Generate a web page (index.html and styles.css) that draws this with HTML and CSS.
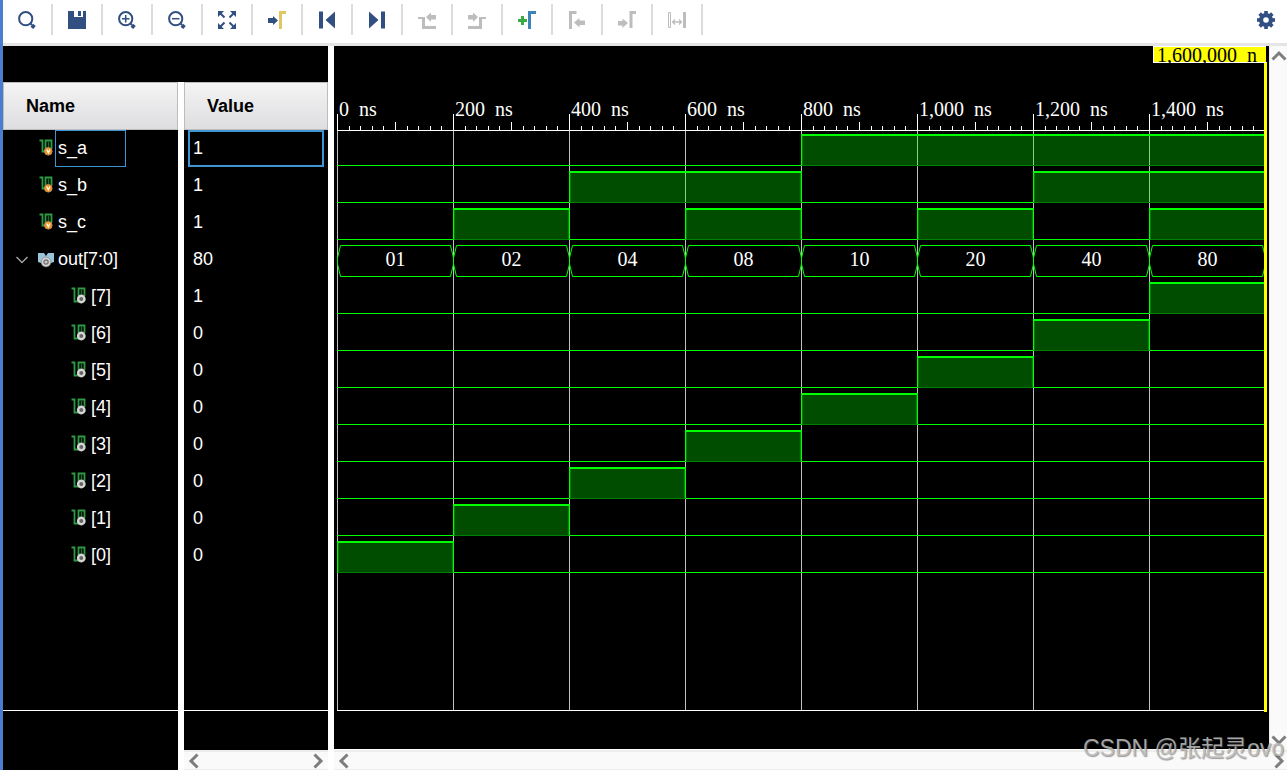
FILE: index.html
```
<!DOCTYPE html>
<html lang="en">
<head>
<meta charset="utf-8">
<title>Waveform viewer</title>
<link rel="stylesheet" href="styles.css">
</head>
<body>
<svg class="defs" aria-hidden="true">
  <defs>
    <symbol id="sig-in" viewBox="0 0 16 17">
      <path d="M.5 1.500H3.500V12.500H6.500V1.500H12.500V10" fill="none" stroke="#2f9a44" stroke-width="1.800"/>
      <path d="M9.500 2.500v6" stroke="#1d6b2c" stroke-width="1.500"/>
      <circle cx="9.300" cy="12.300" r="3.800" fill="#f7941e" stroke="#c08a55"/>
      <path d="M7.700 10.500l1.600 3.300 1.600-3.300" fill="none" stroke="#fff" stroke-width="1.200"/>
    </symbol>
    <symbol id="sig-bit" viewBox="0 0 16 17">
      <path d="M.5 1.500H3.500V14.500H7.500V1.500H13.500V9" fill="none" stroke="#2f9a44" stroke-width="1.800"/>
      <path d="M10.500 2.500v5" stroke="#1d6b2c" stroke-width="1.500"/>
      <circle cx="10.300" cy="12" r="3.200" fill="#666" stroke="#d6d6d6" stroke-width="2.400"/>
    </symbol>
    <symbol id="bus" viewBox="0 0 16 16">
      <path d="M0 1h6l2 3 2-3h6v9l-3 1H3l-3-1z" fill="#9cc4d8"/>
      <circle cx="8" cy="10" r="4.900" fill="#d4d4d4" stroke="#777" stroke-width=".6"/>
      <circle cx="8" cy="10" r="2.200" fill="#c4c4c4" stroke="#6f6f6f" stroke-width="1.200"/>
    </symbol>
    <symbol id="chev-l" viewBox="0 0 16 16"><path d="M11.500 1.500L5 8l6.500 6.500" fill="none" stroke="#7d7d7d" stroke-width="3"/></symbol>
    <symbol id="chev-r" viewBox="0 0 16 16"><path d="M4.500 1.500L11 8l-6.500 6.500" fill="none" stroke="#7d7d7d" stroke-width="3"/></symbol>
    <symbol id="chev-u" viewBox="0 0 16 16"><path d="M1.500 11.500L8 5l6.500 6.500" fill="none" stroke="#7d7d7d" stroke-width="3"/></symbol>
    <symbol id="chev-d" viewBox="0 0 16 16"><path d="M1.500 4.500L8 11l6.500-6.500" fill="none" stroke="#7d7d7d" stroke-width="3"/></symbol>
    <g id="ticks" fill="#fff" shape-rendering="crispEdges">
      <rect x="0" y="0" width="1" height="16"/>
      <rect x="10%" y="12" width="1" height="4"/><rect x="20%" y="12" width="1" height="4"/>
      <rect x="30%" y="12" width="1" height="4"/><rect x="40%" y="12" width="1" height="4"/>
      <rect x="50%" y="8" width="1" height="8"/>
      <rect x="60%" y="12" width="1" height="4"/><rect x="70%" y="12" width="1" height="4"/>
      <rect x="80%" y="12" width="1" height="4"/><rect x="90%" y="12" width="1" height="4"/>
    </g>
    <symbol id="cap-l" viewBox="0 0 5 32"><path d="M5 .5H3.500L.5 13v6L3.500 31.500H5" fill="none" stroke="#0f0"/></symbol>
    <symbol id="cap-r" viewBox="0 0 5 32"><path d="M0 .5h1.500L4.500 13v6L1.500 31.500H0" fill="none" stroke="#0f0"/></symbol>
  </defs>
</svg>

<div class="app">
  <header class="toolbar">
    <button class="tool" aria-label="Search"><svg viewBox="0 0 18 18"><circle cx="7.700" cy="7.700" r="6.600" fill="none" stroke="#324f82" stroke-width="2"/><path d="M12.500 12.500l1.500 1.500" stroke="#324f82" stroke-width="2"/><path d="M13.800 14.300l2.700 2.200" stroke="#324f82" stroke-width="4"/></svg></button>
    <button class="tool" aria-label="Save"><svg viewBox="0 0 18 18"><path d="M0 0h6v6h9V0h3v18H0z" fill="#324f82"/><path d="M10 0h3v5h-3z" fill="#324f82"/></svg></button>
    <button class="tool" aria-label="Zoom in"><svg viewBox="0 0 18 18"><circle cx="7.700" cy="7.700" r="6.600" fill="none" stroke="#324f82" stroke-width="2"/><path d="M4 7.700h7.500M7.700 4v7.500" stroke="#324f82" stroke-width="1.500"/><path d="M12.500 12.500l1.500 1.500" stroke="#324f82" stroke-width="2"/><path d="M13.800 14.300l2.700 2.200" stroke="#324f82" stroke-width="4"/></svg></button>
    <button class="tool" aria-label="Zoom out"><svg viewBox="0 0 18 18"><circle cx="7.700" cy="7.700" r="6.600" fill="none" stroke="#324f82" stroke-width="2"/><path d="M4 7.700h7.500" stroke="#324f82" stroke-width="1.500"/><path d="M12.500 12.500l1.500 1.500" stroke="#324f82" stroke-width="2"/><path d="M13.800 14.300l2.700 2.200" stroke="#324f82" stroke-width="4"/></svg></button>
    <button class="tool" aria-label="Zoom fit"><svg viewBox="0 0 18 18"><path d="M0 0h6L0 6zM18 0h-6l6 6zM0 18h6l-6-6zM18 18h-6l6-6z" fill="#324f82"/><path d="M2 2l4.500 4.500M16 2l-4.500 4.500M2 16l4.500-4.500M16 16l-4.500-4.500" stroke="#324f82" stroke-width="2"/></svg></button>
    <button class="tool" aria-label="Go to cursor"><svg viewBox="0 0 18 18"><path d="M0 7h5V5l5 4.500L5 14v-2H0z" fill="#324f82"/><path d="M12.500 18V1.500H18" fill="none" stroke="#e0c764" stroke-width="3"/></svg></button>
    <button class="tool" aria-label="Go to start"><svg viewBox="0 0 18 18"><path d="M1 .5h4v17H1zM17 .5v17L7.500 9z" fill="#324f82"/></svg></button>
    <button class="tool" aria-label="Go to end"><svg viewBox="0 0 18 18"><path d="M1 .5v17L10.500 9zM13 .5h4v17h-4z" fill="#324f82"/></svg></button>
    <button class="tool" aria-label="Previous transition"><svg viewBox="0 0 18 18"><path d="M8 6l5-4.500V4h5v4.500h-5V11zM0 6h7v9h11v3H4V8H0z" fill="#bdbdbd"/></svg></button>
    <button class="tool" aria-label="Next transition"><svg viewBox="0 0 18 18"><path d="M10 6L5 1.500V4H0v4.500h5V11zM18 6h-7v9H0v3h14V8h4z" fill="#bdbdbd"/></svg></button>
    <button class="tool" aria-label="Add marker"><svg viewBox="0 0 18 18"><path d="M0 9.500h9M4.500 5v9" stroke="#39ad43" stroke-width="3"/><path d="M11.500 18V1.500H18" fill="none" stroke="#3b84b8" stroke-width="3"/></svg></button>
    <button class="tool" aria-label="Previous marker"><svg viewBox="0 0 18 18"><path d="M2.500 18V1.500h6" fill="none" stroke="#bdbdbd" stroke-width="3"/><path d="M6 11.500L11.500 7v2.500H17v4.500h-5.500v2.500z" fill="#bdbdbd"/></svg></button>
    <button class="tool" aria-label="Next marker"><svg viewBox="0 0 18 18"><path d="M13 17V1.500h5" fill="none" stroke="#bdbdbd" stroke-width="3"/><path d="M10 12L4.500 7.500V10H0v4.500h4.500V17z" fill="#bdbdbd"/></svg></button>
    <button class="tool" aria-label="Swap cursors"><svg viewBox="0 0 18 18"><path d="M.5 1.500h2v15h-2z" fill="none" stroke="#bdbdbd"/><path d="M15 1h3v16h-3z" fill="#bdbdbd"/><path d="M4.500 11h9M7 8.500L4.500 11 7 13.500M11 8.500l2.500 2.500-2.500 2.500" fill="none" stroke="#bdbdbd" stroke-width="1.300"/></svg></button>
    <button class="tool settings" aria-label="Settings"><svg viewBox="-9 -9 18 18"><g fill="#324f82"><path d="M-1.800-9h3.600v18h-3.600z"/><path d="M-1.800-9h3.600v18h-3.600z" transform="rotate(45)"/><path d="M-1.800-9h3.600v18h-3.600z" transform="rotate(90)"/><path d="M-1.800-9h3.600v18h-3.600z" transform="rotate(135)"/><circle r="7"/></g><circle r="2.800" fill="#fff"/></svg></button>
  </header>

  <main class="workspace">
    <section class="signals">
      <div class="pane names">
        <h2>Name</h2>
        <ul>
          <li class="top"><svg class="ico"><use href="#sig-in"/></svg><span class="label selected">s_a</span></li>
          <li class="top"><svg class="ico"><use href="#sig-in"/></svg><span class="label">s_b</span></li>
          <li class="top"><svg class="ico"><use href="#sig-in"/></svg><span class="label">s_c</span></li>
          <li class="group"><button class="expand" aria-label="Collapse out[7:0]"><svg viewBox="0 0 12 8"><path d="M.5 1L6 6.500 11.500 1" fill="none" stroke="#a0a0a0" stroke-width="1.500"/></svg></button><svg class="bus-ico"><use href="#bus"/></svg><span class="label">out[7:0]</span></li>
          <li class="bit"><svg class="ico"><use href="#sig-bit"/></svg><span class="label">[7]</span></li>
          <li class="bit"><svg class="ico"><use href="#sig-bit"/></svg><span class="label">[6]</span></li>
          <li class="bit"><svg class="ico"><use href="#sig-bit"/></svg><span class="label">[5]</span></li>
          <li class="bit"><svg class="ico"><use href="#sig-bit"/></svg><span class="label">[4]</span></li>
          <li class="bit"><svg class="ico"><use href="#sig-bit"/></svg><span class="label">[3]</span></li>
          <li class="bit"><svg class="ico"><use href="#sig-bit"/></svg><span class="label">[2]</span></li>
          <li class="bit"><svg class="ico"><use href="#sig-bit"/></svg><span class="label">[1]</span></li>
          <li class="bit"><svg class="ico"><use href="#sig-bit"/></svg><span class="label">[0]</span></li>
        </ul>
        <div class="foot"></div>
      </div>
      <div class="pane values">
        <h2>Value</h2>
        <ul>
          <li class="selected">1</li><li>1</li><li>1</li><li>80</li>
          <li>1</li><li>0</li><li>0</li><li>0</li><li>0</li><li>0</li><li>0</li><li>0</li>
        </ul>
        <div class="foot"></div>
        <div class="hscroll">
          <button aria-label="Scroll values left"><svg><use href="#chev-l"/></svg></button>
          <button aria-label="Scroll values right"><svg><use href="#chev-r"/></svg></button>
        </div>
      </div>
    </section>

    <section class="wave">
      <div class="view">
        <div class="canvas">
          <div class="plot">
            <div class="ruler">
              <div><span>0 <b>ns</b></span><svg><use href="#ticks"/></svg></div>
              <div><span>200 <b>ns</b></span><svg><use href="#ticks"/></svg></div>
              <div><span>400 <b>ns</b></span><svg><use href="#ticks"/></svg></div>
              <div><span>600 <b>ns</b></span><svg><use href="#ticks"/></svg></div>
              <div><span>800 <b>ns</b></span><svg><use href="#ticks"/></svg></div>
              <div><span>1,000 <b>ns</b></span><svg><use href="#ticks"/></svg></div>
              <div><span>1,200 <b>ns</b></span><svg><use href="#ticks"/></svg></div>
              <div><span>1,400 <b>ns</b></span><svg><use href="#ticks"/></svg></div>
            </div>
            <div class="tracks">
              <div class="grid"><i></i><i></i><i></i><i></i><i></i><i></i><i></i><i></i></div>
              <div class="track"><i class="lo w4"></i><i class="hi w4"></i></div>
              <div class="track"><i class="lo w2"></i><i class="hi w2"></i><i class="lo w2"></i><i class="hi w2"></i></div>
              <div class="track"><i class="lo"></i><i class="hi"></i><i class="lo"></i><i class="hi"></i><i class="lo"></i><i class="hi"></i><i class="lo"></i><i class="hi"></i></div>
              <div class="track">
                <div class="word"><svg><use href="#cap-l"/></svg><span>01</span><svg><use href="#cap-r"/></svg></div>
                <div class="word"><svg><use href="#cap-l"/></svg><span>02</span><svg><use href="#cap-r"/></svg></div>
                <div class="word"><svg><use href="#cap-l"/></svg><span>04</span><svg><use href="#cap-r"/></svg></div>
                <div class="word"><svg><use href="#cap-l"/></svg><span>08</span><svg><use href="#cap-r"/></svg></div>
                <div class="word"><svg><use href="#cap-l"/></svg><span>10</span><svg><use href="#cap-r"/></svg></div>
                <div class="word"><svg><use href="#cap-l"/></svg><span>20</span><svg><use href="#cap-r"/></svg></div>
                <div class="word"><svg><use href="#cap-l"/></svg><span>40</span><svg><use href="#cap-r"/></svg></div>
                <div class="word"><svg><use href="#cap-l"/></svg><span>80</span><svg><use href="#cap-r"/></svg></div>
              </div>
              <div class="track"><i class="lo w7"></i><i class="hi"></i></div>
              <div class="track"><i class="lo w6"></i><i class="hi"></i><i class="lo"></i></div>
              <div class="track"><i class="lo w5"></i><i class="hi"></i><i class="lo w2"></i></div>
              <div class="track"><i class="lo w4"></i><i class="hi"></i><i class="lo w3"></i></div>
              <div class="track"><i class="lo w3"></i><i class="hi"></i><i class="lo w4"></i></div>
              <div class="track"><i class="lo w2"></i><i class="hi"></i><i class="lo w5"></i></div>
              <div class="track"><i class="lo"></i><i class="hi"></i><i class="lo w6"></i></div>
              <div class="track"><i class="hi"></i><i class="lo w7"></i></div>
            </div>
            <div class="cursor-line"></div>
            <div class="cursor-tag">1,600,000 <b>n</b></div>
          </div>
        </div>
        <div class="vscroll">
          <button aria-label="Scroll up"><svg><use href="#chev-u"/></svg></button>
          <button aria-label="Scroll down"><svg><use href="#chev-d"/></svg></button>
        </div>
      </div>
      <div class="hscroll">
        <button aria-label="Scroll waveform left"><svg><use href="#chev-l"/></svg></button>
        <button aria-label="Scroll waveform right"><svg><use href="#chev-r"/></svg></button>
      </div>
    </section>
  </main>
  <div class="watermark">CSDN @张起灵ovo</div>
</div>
</body>
</html>
```
FILE: styles.css
```
* { box-sizing: border-box; }
body { margin: 0; background: #fff; font-family: "Liberation Sans", Arial, sans-serif; font-size: 18px; overflow: hidden; }
button { border: 0; padding: 0; margin: 0; background: none; display: flex; cursor: pointer; }
svg { display: block; flex: none; }
ul { list-style: none; margin: 0; padding: 0; }
b { font-weight: normal; }
.defs { position: absolute; width: 0; height: 0; }

.app { position: relative; display: flex; flex-direction: column; min-height: 100vh; border-left: 3px solid #4a7dd0; }

/* Toolbar */
.toolbar { display: flex; height: 46px; padding-top: 4px; border-bottom: 3px solid #e5e5e5; }
.tool { width: 50px; height: 31px; padding-top: 7px; justify-content: center; border-right: 2px solid #dcdcdc; }
.tool svg { width: 18px; height: 18px; }
.settings { width: 18px; margin-left: auto; margin-right: 12px; border-right: 0; }

/* Signal names and values */
.workspace { flex: 1; display: flex; gap: 6px; }
.signals { flex: none; display: grid; grid-template-columns: 175px 144px; column-gap: 6px; border-top: 36px solid #000; }
.pane { display: flex; flex-direction: column; background: #000; color: #fff; }
.pane h2 { display: flex; align-items: center; height: 48px; margin: 0; padding-left: 22px; border: 1px solid #bdbdbd; background: linear-gradient(#f4f4f4, #dedee1); color: #000; font-size: 18px; line-height: 24px; }
.pane ul { flex: 1; border-bottom: 1px solid #fff; }
.pane li { display: flex; align-items: center; height: 37px; line-height: 24px; }
.names .foot { height: 59px; }
.values .foot { height: 39px; }
.names .top { padding-left: 36px; }
.names .group { padding-left: 13px; }
.names .bit { padding-left: 68px; }
.ico { width: 16px; height: 17px; margin-bottom: 2px; }
.bus-ico { width: 16px; height: 16px; margin-left: 10px; }
.expand { width: 12px; }
.expand svg { width: 12px; height: 8px; }
.label { display: flex; align-items: center; height: 37px; padding: 0 0 2px 3px; border: 1px solid transparent; }
.top .label { width: 71px; padding-left: 2px; }
.label.selected { border-color: #3f94d4; }
.values li { margin: 0 4px; padding: 0 0 2px 3px; border: 2px solid transparent; }
.values li.selected { border-color: #3f94d4; }

/* Scroll bars */
.hscroll { display: flex; justify-content: space-between; align-items: center; height: 20px; padding: 0 2px; background: #fafafa; border-top: 2px solid #ededed; border-bottom: 1px solid #ededed; }
.hscroll svg, .vscroll svg { width: 16px; height: 16px; }
.vscroll { flex: none; width: 18px; display: flex; flex-direction: column; justify-content: space-between; align-items: flex-end; padding: 2px 0; background: #fafafa; border-left: 1px solid #ededed; }

/* Waveform */
.wave { flex: 1; min-width: 0; display: flex; flex-direction: column; }
.wave .hscroll { padding-right: 0; }
.view { flex: 1; display: flex; }
.canvas { flex: 1; min-width: 0; padding: 0 4px 38px 3px; background: #000; color: #fff; border-bottom: 1px solid #fff; font-family: "Liberation Serif", "Times New Roman", serif; font-size: 20px; line-height: 20px; }
.plot { position: relative; display: flex; flex-direction: column; height: 100%; }
.plot b { margin-left: 5px; }
.ruler { display: grid; grid-template-columns: repeat(8, minmax(0, 1fr)); height: 85px; align-items: end; border-bottom: 1px solid #fff; }
.ruler div { display: flex; flex-direction: column; }
.ruler span { padding-left: 2px; height: 16px; line-height: 22px; white-space: nowrap; }
.ruler svg { width: 100%; height: 16px; overflow: visible; }
.tracks { position: relative; flex: 1; border-bottom: 1px solid #fff; }
.grid { position: absolute; inset: 0; display: grid; grid-template-columns: repeat(8, minmax(0, 1fr)); }
.grid i { border-left: 1px solid #c0c0c0; }
.track { position: relative; display: grid; grid-template-columns: repeat(8, minmax(0, 1fr)); height: 37px; padding: 3px 0 2px; }
.lo { border-bottom: 1px solid #0f0; }
.hi { position: relative; z-index: 1; margin-right: -1px; border: 1px solid #0f0; border-top-width: 2px; border-bottom-color: #008000; background: rgba(0, 255, 0, .3); background-clip: padding-box; box-shadow: inset 1px 0 #008000, inset -1px 0 #008000; }
.w2 { grid-column: span 2; }
.w3 { grid-column: span 3; }
.w4 { grid-column: span 4; }
.w5 { grid-column: span 5; }
.w6 { grid-column: span 6; }
.w7 { grid-column: span 7; }
.word { display: flex; margin-right: -1px; }
.word svg { width: 5px; height: 32px; }
.word span { flex: 1; border: solid #0f0; border-width: 1px 0; text-align: center; line-height: 26px; }
.cursor-line { position: absolute; z-index: 2; top: 16px; bottom: -1px; right: -2px; width: 3px; background: #ff0; }
.cursor-tag { position: absolute; z-index: 2; top: 0; right: -1px; min-width: 113px; height: 17px; padding-left: 3px; white-space: nowrap; background: #ff0; border: 1px solid #fff; border-width: 1px 0 1px 1px; color: #000; line-height: 17px; }

.watermark { position: absolute; z-index: 3; right: 3px; bottom: 6px; font-family: "Liberation Sans", "Noto Sans CJK SC", sans-serif; font-size: 23px; line-height: 32px; color: rgba(190, 190, 190, .85); text-shadow: 1px 1px 1px rgba(90, 90, 90, .6); pointer-events: none; }
```
